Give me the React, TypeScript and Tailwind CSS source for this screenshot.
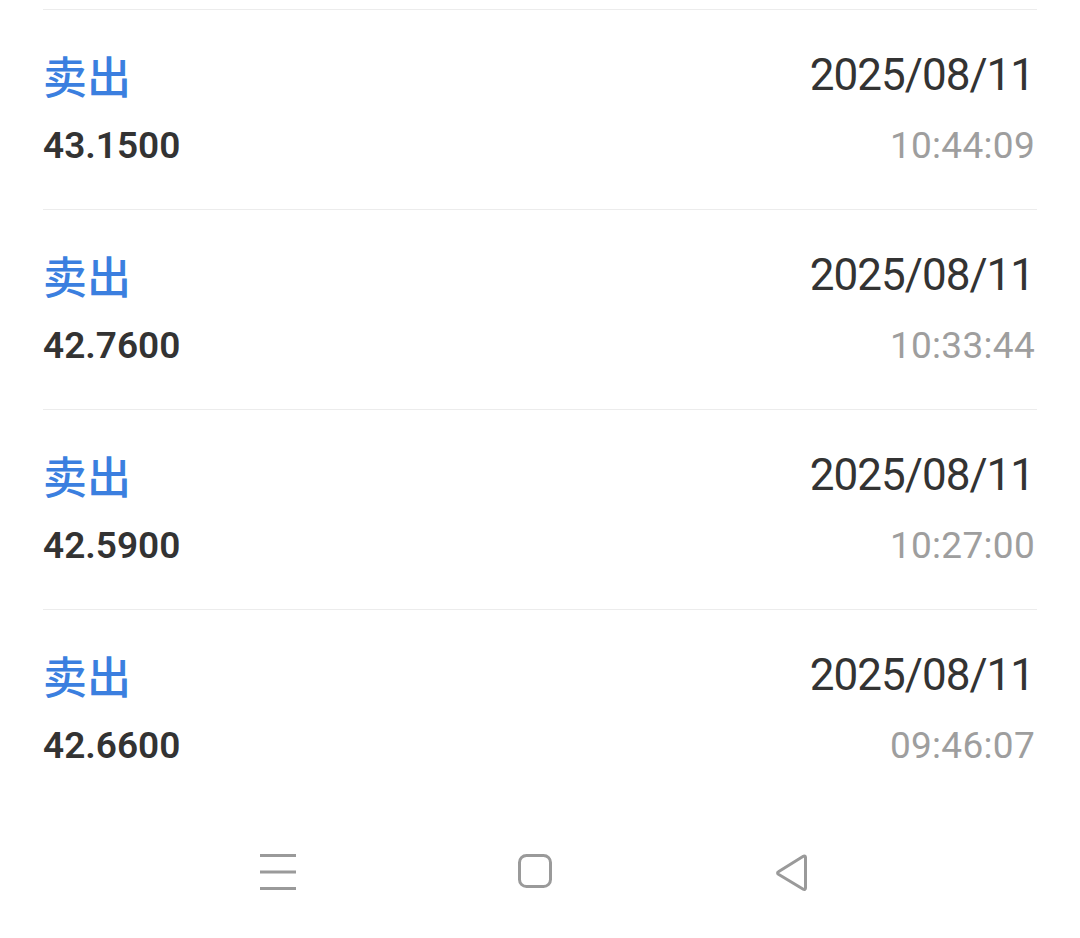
const RECORDS = [
  { side: '卖出', price: '43.1500', date: '2025/08/11', time: '10:44:09' },
  { side: '卖出', price: '42.7600', date: '2025/08/11', time: '10:33:44' },
  { side: '卖出', price: '42.5900', date: '2025/08/11', time: '10:27:00' },
  { side: '卖出', price: '42.6600', date: '2025/08/11', time: '09:46:07' },
];

function MenuIcon() {
  return (
    <svg width="40" height="40" viewBox="0 0 40 40" fill="none">
      <path d="M2 3.5h36M2 20h36M2 36.5h36" stroke="#9a9a9a" strokeWidth="3" />
    </svg>
  );
}

function HomeIcon() {
  return (
    <svg width="40" height="40" viewBox="0 0 40 40" fill="none">
      <rect x="4.5" y="3.5" width="31" height="31" rx="7" stroke="#9a9a9a" strokeWidth="3" />
    </svg>
  );
}

function BackIcon() {
  return (
    <svg width="40" height="40" viewBox="0 0 40 40" fill="none">
      <path
        d="M33.5 5.5v30.5c0 1.3-1.1 1.9-2.2 1.3L6.4 22.3c-1.1-0.7-1.1-2 0-2.6L31.3 4.2c1.1-0.6 2.2 0 2.2 1.3z"
        stroke="#9a9a9a"
        strokeWidth="3"
        strokeLinejoin="round"
      />
    </svg>
  );
}

export default function App() {
  return (
    <div className="w-[1080px] h-[938px] bg-white flex flex-col overflow-hidden font-['Roboto','Noto_Sans_CJK_SC',sans-serif]">
      <div className="h-[9px]" />
      <div className="px-[43px]">
        {RECORDS.map((r, i) => (
          <div key={i} className="h-[200px] border-t border-[#ececec] flex justify-between pt-[35px]">
            <div className="flex flex-col gap-[16px]">
              <div className="h-[60px] leading-[60px] text-[44px] font-medium text-[#3b7fdf] font-['Noto_Sans_CJK_SC',sans-serif]">
                {r.side}
              </div>
              <div className="h-[50px] leading-[50px] text-[37px] font-semibold text-[#333333]">
                {r.price}
              </div>
            </div>
            <div className="flex flex-col items-end gap-[16px]">
              <div className="h-[60px] leading-[60px] text-[44px] text-[#333333] tracking-[-1px] mr-[3px]">
                {r.date}
              </div>
              <div className="h-[50px] leading-[50px] text-[37px] text-[#9e9e9e] tracking-[0.3px] mr-[2px]">
                {r.time}
              </div>
            </div>
          </div>
        ))}
      </div>
      <div className="flex items-center pl-[258px] gap-[217px] pt-[43px]">
        <MenuIcon />
        <HomeIcon />
        <BackIcon />
      </div>
    </div>
  );
}
